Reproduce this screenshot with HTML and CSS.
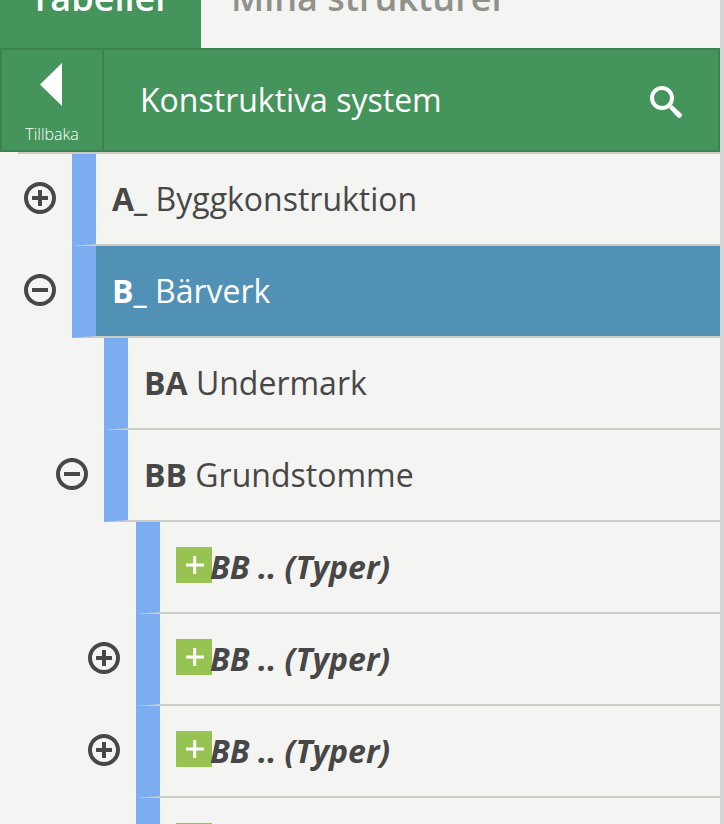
FILE: index.html
```html
<!DOCTYPE html>
<html lang="sv">
<head>
<meta charset="utf-8">
<title>Konstruktiva system</title>
<link rel="stylesheet" href="styles.css">
</head>
<body>
<svg class="defs" aria-hidden="true">
  <symbol id="plus" viewBox="0 0 32 32"><circle cx="16" cy="16" r="14" fill="none" stroke="currentColor" stroke-width="4"/><path d="M8 16H24M16 8V24" stroke="currentColor" stroke-width="4"/></symbol>
  <symbol id="minus" viewBox="0 0 32 32"><circle cx="16" cy="16" r="14" fill="none" stroke="currentColor" stroke-width="4"/><path d="M8 16H24" stroke="currentColor" stroke-width="4"/></symbol>
  <symbol id="add" viewBox="0 0 36 36"><path d="M10 18H28M18.700 9V27" stroke="currentColor" stroke-width="3"/></symbol>
</svg>
<main class="panel">
  <nav class="tabs">
    <a class="tab tab-active"><span>Tabeller</span></a>
    <a class="tab"><span>Mina strukturer</span></a>
  </nav>
  <header class="bar">
    <a class="back">
      <svg class="arrow" viewBox="0 0 22 43"><path d="M22 0V43L0 21.500Z" fill="currentColor"/></svg>
      <span>Tillbaka</span>
    </a>
    <h1 class="title">Konstruktiva system</h1>
    <svg class="search" viewBox="0 0 32 32"><circle cx="12" cy="12" r="10" fill="none" stroke="currentColor" stroke-width="4"/><path d="M19 22L22 19L31.500 27.800Q32.600 30 30.500 31.600Q29 32.400 27.500 31.300Z" fill="currentColor"/></svg>
  </header>
  <div class="top-rule"></div>
  <ul class="tree">
    <li>
      <div class="row"><span class="toggle"><svg><use href="#plus"/></svg></span><div class="item"><b>A_</b> Byggkonstruktion</div></div>
    </li>
    <li>
      <div class="row"><span class="toggle"><svg><use href="#minus"/></svg></span><div class="item selected"><b>B_</b> Bärverk</div></div>
      <ul>
        <li>
          <div class="row"><span class="toggle"></span><div class="item"><b>BA</b> Undermark</div></div>
        </li>
        <li>
          <div class="row"><span class="toggle"><svg><use href="#minus"/></svg></span><div class="item"><b>BB</b> Grundstomme</div></div>
          <ul>
            <li><div class="row"><span class="toggle"></span><div class="item type"><svg class="add"><use href="#add"/></svg><span>BB .. (Typer)</span></div></div></li>
            <li><div class="row"><span class="toggle"><svg><use href="#plus"/></svg></span><div class="item type"><svg class="add"><use href="#add"/></svg><span>BB .. (Typer)</span></div></div></li>
            <li><div class="row"><span class="toggle"><svg><use href="#plus"/></svg></span><div class="item type"><svg class="add"><use href="#add"/></svg><span>BB .. (Typer)</span></div></div></li>
            <li><div class="row"><span class="toggle"></span><div class="item type"><svg class="add"><use href="#add"/></svg></div></div></li>
          </ul>
        </li>
      </ul>
    </li>
  </ul>
</main>
</body>
</html>
```
FILE: styles.css
```css
* { box-sizing: border-box; }
body {
  margin: 0;
  height: 824px;
  overflow: hidden;
  background: #f4f4f2;
  color: #474747;
  font: 32px/44px "Open Sans", sans-serif;
}
.defs { display: none; }
.panel {
  width: 724px;
  height: 824px;
  overflow: hidden;
  border-right: 4px solid #d6d6d6;
}
.tabs {
  display: flex;
  height: 48px;
}
.tab {
  display: flex;
  align-items: flex-end;
  height: 48px;
  padding: 0 30px 26px;
  color: #91918a;
  font-size: 36px;
  font-weight: 600;
  line-height: 48px;
  white-space: nowrap;
}
.tab-active {
  width: 201px;
  padding-left: 30px;
  padding-right: 0;
  background: #45945b;
  color: #fff;
}
.bar {
  display: flex;
  align-items: center;
  height: 104px;
  border: 2px solid #3d824f;
  background: #45945b;
  color: #fff;
}
.back {
  display: flex;
  flex-direction: column;
  align-items: center;
  width: 102px;
  height: 100px;
  padding-top: 13px;
  border-right: 2px solid #3d824f;
  font-size: 16px;
  font-weight: 350;
  line-height: 22px;
}
.arrow {
  width: 22px;
  height: 43px;
  margin: 0 2px 17px 0;
}
.title {
  flex: 1;
  margin: 0;
  padding-left: 36px;
  font-size: 32px;
  font-weight: 400;
}
.search {
  width: 32px;
  height: 32px;
  margin: 4px 36px 0 0;
}
.top-rule {
  height: 2px;
  margin-left: 18px;
  background: #cbcbc5;
}
ul {
  margin: 0;
  padding: 0;
  list-style: none;
}
ul ul { padding-left: 32px; }
.row {
  display: flex;
  height: 92px;
}
.toggle {
  width: 72px;
  padding: 28px 0 0 24px;
}
.toggle svg {
  display: block;
  width: 32px;
  height: 32px;
}
.item {
  flex: 1;
  padding: 23px 0 0 16px;
  border-left: 24px solid #7cadf1;
  border-bottom: 2px solid #cbcbc5;
  white-space: nowrap;
}
.selected {
  background: #5191b6;
  color: #fff;
}
.type {
  display: flex;
  align-items: flex-start;
  font-weight: 700;
  font-style: italic;
}
.type span { margin-left: -2px; }
.add {
  width: 36px;
  height: 36px;
  margin-top: 2px;
  background: #96c352;
  color: #fff;
}
```
